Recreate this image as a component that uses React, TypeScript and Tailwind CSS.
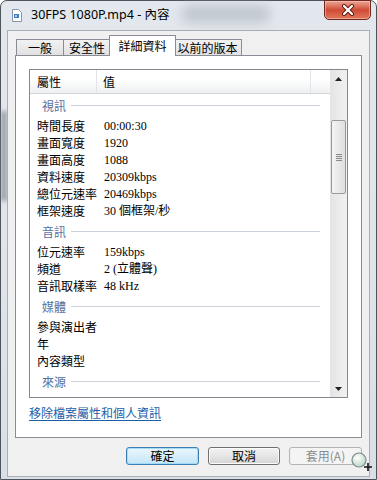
import React from "react"

const cjk = { fontFamily: '"Noto Sans CJK TC", "Noto Sans", sans-serif' }
const val = { fontFamily: '"Liberation Serif", "Noto Sans CJK TC", serif' }

type Row = { group: string } | { name: string; value?: string }

const rows: Row[] = [
  { group: "視訊" },
  { name: "時間長度", value: "00:00:30" },
  { name: "畫面寬度", value: "1920" },
  { name: "畫面高度", value: "1088" },
  { name: "資料速度", value: "20309kbps" },
  { name: "總位元速率", value: "20469kbps" },
  { name: "框架速度", value: "30 個框架/秒" },
  { group: "音訊" },
  { name: "位元速率", value: "159kbps" },
  { name: "頻道", value: "2 (立體聲)" },
  { name: "音訊取樣率", value: "48 kHz" },
  { group: "媒體" },
  { name: "參與演出者" },
  { name: "年" },
  { name: "內容類型" },
  { group: "來源" },
]

function FileIcon() {
  return (
    <svg width="12" height="13" viewBox="0 0 12 13">
      <path d="M1.5 0.5h6l3 3v9h-9z" fill="#fdfdfd" stroke="#8a96a6" />
      <rect x="3" y="5" width="5" height="4" fill="#3d7cc9" />
      <rect x="4" y="6" width="2" height="2" fill="#a8d0f2" />
    </svg>
  )
}

function CloseButton() {
  return (
    <div className="absolute right-[5px] top-[-1px] flex h-[20px] w-[47px] items-center justify-center rounded-b-[5px] border border-[#6e2a22] bg-gradient-to-b from-[#e9a595] via-[#cf4a35] to-[#e0775a] shadow-[inset_0_0_0_1px_rgba(255,210,200,0.5)]">
      <svg width="14" height="12" viewBox="0 0 14 12">
        <path d="M3 2l8 8M11 2l-8 8" stroke="#5a1a12" strokeWidth="4" strokeLinecap="round" />
        <path d="M3 2l8 8M11 2l-8 8" stroke="#ffffff" strokeWidth="2.2" strokeLinecap="round" />
      </svg>
    </div>
  )
}

function Tab({ label, w, active }: { label: string; w: string; active?: boolean }) {
  if (active) {
    return (
      <div
        className={`relative z-10 -mx-[2px] -mb-px flex h-[21px] items-center justify-center border border-b-0 border-[#898c95] bg-white text-[12px] leading-none text-black ${w}`}
        style={cjk}
      >
        {label}
      </div>
    )
  }
  return (
    <div
      className={`-ml-px flex h-[16px] items-center justify-center border border-b-0 border-[#898c95] bg-gradient-to-b from-[#f2f2f2] to-[#e1e1e1] text-[12px] leading-none text-black first:ml-0 ${w}`}
      style={cjk}
    >
      {label}
    </div>
  )
}

function Scrollbar() {
  return (
    <div className="flex w-[17px] shrink-0 flex-col bg-gradient-to-r from-[#e4e4e4] to-[#f1f1f1]">
      <div className="flex h-[17px] items-center justify-center">
        <svg width="7" height="4" viewBox="0 0 7 4">
          <path d="M0 4L3.5 0L7 4z" fill="#222" />
        </svg>
      </div>
      <div className="h-[33px]" />
      <div className="mx-px flex h-[74px] items-center justify-center rounded-[2px] border border-[#9a9a9a] bg-gradient-to-r from-[#f4f4f4] to-[#dedede]">
        <div className="flex flex-col gap-px">
          <div className="h-px w-[6px] bg-[#8a8a8a]" />
          <div className="h-px w-[6px] bg-[#8a8a8a]" />
          <div className="h-px w-[6px] bg-[#8a8a8a]" />
          <div className="h-px w-[6px] bg-[#8a8a8a]" />
        </div>
      </div>
      <div className="flex-1" />
      <div className="flex h-[17px] items-center justify-center">
        <svg width="7" height="4" viewBox="0 0 7 4">
          <path d="M0 0L3.5 4L7 0z" fill="#222" />
        </svg>
      </div>
    </div>
  )
}

function Button({ label, kind }: { label: string; kind?: "default" | "disabled" }) {
  if (kind === "default") {
    return (
      <div className="flex h-[18px] w-[73px] items-center justify-center rounded-[3px] border border-[#3c7fb1] bg-gradient-to-b from-[#ecf7fd] to-[#c4e5f6] text-[12px] leading-none text-black shadow-[inset_0_0_0_1px_#a4dbf6]" style={cjk}>
        {label}
      </div>
    )
  }
  if (kind === "disabled") {
    return (
      <div className="flex h-[18px] w-[73px] items-center justify-center rounded-[3px] border border-[#b0b4b8] bg-[#f4f4f4] text-[12px] leading-none text-[#8c8c8c]" style={cjk}>
        {label}
      </div>
    )
  }
  return (
    <div className="flex h-[18px] w-[72px] items-center justify-center rounded-[3px] border border-[#707070] bg-gradient-to-b from-[#f2f2f2] via-[#e6e6e6] to-[#d3d3d3] text-[12px] leading-none text-black shadow-[inset_0_0_0_1px_#fbfbfb]" style={cjk}>
      {label}
    </div>
  )
}

export default function App() {
  return (
    <div className="h-[480px] w-[377px] overflow-hidden bg-white">
      <div className="relative flex h-full flex-col rounded-t-[7px] border border-[#4e545a] bg-gradient-to-b from-[#e3e8ee] via-[#dfe5eb] to-[#d8dfe6]">
        <div className="pointer-events-none absolute left-[180px] top-[4px] h-[18px] w-[90px] rounded-full bg-[#aab2bb] opacity-60 blur-[6px]" />
        <div className="pointer-events-none absolute left-[0px] top-[110px] h-[90px] w-[6px] bg-[#7d848c] opacity-70 blur-[2px]" />

        <div className="flex h-[29px] shrink-0 items-center pl-[10px]">
          <FileIcon />
          <span className="relative ml-[8px] text-[12.5px] leading-none text-black" style={{ fontFamily: '"Noto Sans", "Noto Sans CJK TC", sans-serif' }}>
            30FPS 1080P.mp4 - 內容
          </span>
          <CloseButton />
        </div>

        <div className="relative mx-[6px] mb-[2px] flex flex-1 flex-col border border-[#a7aeb6] bg-[#f0f0f0] px-[7px] pt-[5px]">
          <div className="flex h-[19px] items-end pl-[1px]">
            <Tab label="一般" w="w-[48px]" />
            <Tab label="安全性" w="w-[48px]" />
            <Tab label="詳細資料" w="w-[67px]" active />
            <Tab label="以前的版本" w="w-[69px]" />
          </div>

          <div className="flex h-[383px] flex-col border border-[#898c95] bg-white px-[13px] pt-[13px]">
            <div className="flex h-[329px] border border-[#828790] bg-white">
              <div className="flex min-w-0 flex-1 flex-col overflow-hidden">
                <div className="flex h-[24px] shrink-0 items-center border-b border-[#d5d5d5] bg-gradient-to-b from-white from-40% to-[#eef0f3] text-[12px] text-black" style={cjk}>
                  <div className="flex h-full w-[67px] items-center border-r border-[#e2e4e7] pl-[7px]">屬性</div>
                  <div className="flex h-full w-[214px] items-center border-r border-[#e2e4e7] pl-[6px]">值</div>
                </div>
                {rows.map((r, i) =>
                  "group" in r ? (
                    <div
                      key={i}
                      className={`flex shrink-0 items-center pl-[12px] pr-[10px] ${i === 0 ? "h-[23px]" : "h-[24px] pt-[1px]"}`}
                    >
                      <span className="text-[12px] leading-none text-[#5670a0]" style={cjk}>
                        {r.group}
                      </span>
                      <div className="ml-[5px] h-px flex-1 bg-[#c9d0da]" />
                    </div>
                  ) : (
                    <div key={i} className="flex h-[17px] shrink-0 items-center text-[12px] leading-none text-black">
                      <div className="w-[74px] whitespace-nowrap pl-[7px]" style={cjk}>
                        {r.name}
                      </div>
                      <div className="whitespace-nowrap" style={val}>
                        {r.value}
                      </div>
                    </div>
                  ),
                )}
              </div>
              <Scrollbar />
            </div>

            <div className="mt-[9px] text-[12px] leading-none">
              <span className="text-[#1d5ea8] underline underline-offset-2" style={cjk}>
                移除檔案屬性和個人資訊
              </span>
            </div>
          </div>

          <div className="flex justify-end gap-[9px] pt-[9px]">
            <Button label="確定" kind="default" />
            <Button label="取消" />
            <Button label="套用(A)" kind="disabled" />
          </div>

          <svg className="absolute bottom-[2px] right-[-5px]" width="24" height="24" viewBox="0 0 24 24">
            <defs>
              <radialGradient id="glass" cx="0.4" cy="0.35" r="0.7">
                <stop offset="0" stopColor="#ffffff" />
                <stop offset="1" stopColor="#b9d3c2" />
              </radialGradient>
            </defs>
            <circle cx="9" cy="10" r="7" fill="url(#glass)" stroke="#7a8a8a" strokeWidth="1.2" />
            <path d="M18 13v8M14 17h8" stroke="#111" strokeWidth="1.6" />
          </svg>
        </div>
      </div>
    </div>
  )
}
